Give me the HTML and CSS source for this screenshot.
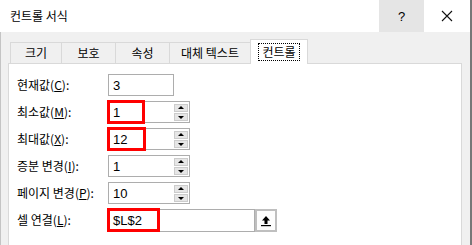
FILE: index.html
```html
<!DOCTYPE html>
<html>
<head>
    <meta charset="UTF-8">
    <title>컨트롤 서식</title>
    <link rel="stylesheet" href="styles.css">
</head>
<body>
<div class="window">
    <div class="titlebar">
        <span class="title">컨트롤 서식</span>
        <div class="caption-btns">
            <span class="cap-btn help">?</span>
            <span class="cap-btn close">
                <svg width="12" height="12" viewBox="0 0 12 12"><path d="M1 1L11 11M11 1L1 11" stroke="#111" stroke-width="1.1" fill="none"/></svg>
            </span>
        </div>
    </div>
    <div class="client">
        <div class="tabs">
            <div class="tab" style="width: 51px">크기</div>
            <div class="tab" style="width: 54px">보호</div>
            <div class="tab" style="width: 54px">속성</div>
            <div class="tab" style="width: 81px">대체 텍스트</div>
            <div class="tab active"><span class="focus">컨트롤</span></div>
        </div>
        <div class="panel">
            <div class="form">
                <label>현재값(<u>C</u>):</label>
                <div class="field">
                    <div class="textbox short"><span>3</span></div>
                </div>

                <label>최소값(<u>M</u>):</label>
                <div class="field">
                    <div class="textbox spin"><span>1</span><div class="spinner"><i class="up"></i><i class="down"></i></div></div>
                    <span class="mark" style="width: 38px"></span>
                </div>

                <label>최대값(<u>X</u>):</label>
                <div class="field">
                    <div class="textbox spin"><span>12</span><div class="spinner"><i class="up"></i><i class="down"></i></div></div>
                    <span class="mark" style="width: 39px"></span>
                </div>

                <label>증분 변경(<u>I</u>):</label>
                <div class="field">
                    <div class="textbox spin"><span>1</span><div class="spinner"><i class="up"></i><i class="down"></i></div></div>
                </div>

                <label>페이지 변경(<u>P</u>):</label>
                <div class="field">
                    <div class="textbox spin"><span>10</span><div class="spinner"><i class="up"></i><i class="down"></i></div></div>
                </div>

                <label>셀 연결(<u>L</u>):</label>
                <div class="field">
                    <div class="refbox">
                        <div class="textbox long"><span>$L$2</span></div>
                        <div class="ref-btn">
                            <svg width="12" height="12" viewBox="0 0 12 12"><path d="M6 1L10 5.5H7.5V9H4.5V5.5H2Z" fill="#000"/><rect x="1" y="10" width="10" height="1.2" fill="#000"/></svg>
                        </div>
                    </div>
                    <span class="mark" style="width: 53px"></span>
                </div>
            </div>
        </div>
    </div>
</div>
</body>
</html>
```

FILE: styles.css
```css
body {
    margin: 0;
    padding: 0;
    font-family: "Noto Sans CJK KR", "Liberation Sans", sans-serif;
    font-size: 12px;
    color: #000;
    background-color: #f0f0f0;
}

.window {
    width: 470px;
    height: 245px;
    border-right: 2px solid #777;
    display: flex;
    flex-direction: column;
    overflow: hidden;
}

.titlebar {
    height: 32px;
    background-color: #fff;
    display: flex;
    align-items: center;
    justify-content: space-between;
    flex-shrink: 0;
}

.title {
    padding-left: 10px;
    line-height: 16px;
}

.caption-btns {
    display: flex;
    height: 100%;
}

.cap-btn {
    width: 45px;
    height: 100%;
    display: flex;
    align-items: center;
    justify-content: center;
}

.help {
    background-color: #e5e5e5;
    font-family: "Liberation Sans", sans-serif;
    font-size: 13px;
}

.close {
    width: 46px;
}

.client {
    flex: 1;
    border-left: 1px solid #c4c4c4;
    padding: 8px 8px 0 7px;
    display: flex;
    flex-direction: column;
}

.tabs {
    display: flex;
    align-items: flex-end;
    padding-left: 2px;
    height: 24px;
    position: relative;
    z-index: 1;
    margin-bottom: -1px;
}

.tab {
    height: 22px;
    box-sizing: border-box;
    border-left: 1px solid #d9d9d9;
    border-top: 1px solid #d9d9d9;
    border-bottom: 1px solid #d9d9d9;
    display: flex;
    align-items: center;
    justify-content: center;
    line-height: 14px;
}

.tab.active {
    width: 58px;
    height: 25px;
    background-color: #fff;
    border: 1px solid #d9d9d9;
    border-bottom: none;
    padding-bottom: 1px;
}

.focus {
    border: 1px dotted #000;
    padding: 1px 3px;
}

.panel {
    flex: 1;
    background-color: #fff;
    border: 1px solid #d9d9d9;
    border-bottom: none;
    padding: 10px 8px 0 8px;
}

.form {
    display: grid;
    grid-template-columns: 91px auto;
    grid-auto-rows: 22px;
    row-gap: 5px;
    align-items: center;
}

.form label {
    line-height: 16px;
    white-space: nowrap;
}

.field {
    position: relative;
    height: 22px;
}

.textbox {
    box-sizing: border-box;
    height: 22px;
    border: 1px solid #adadad;
    background-color: #fff;
    display: flex;
    align-items: center;
    justify-content: space-between;
    padding-left: 4px;
    font-family: "Liberation Sans", sans-serif;
    font-size: 13px;
}

.textbox.short {
    width: 66px;
}

.textbox.spin {
    width: 82px;
    padding-right: 1px;
}

.textbox.long {
    width: 147px;
    height: 23px;
}

.spinner {
    display: flex;
    flex-direction: column;
    gap: 1px;
}

.spinner i {
    width: 14px;
    height: 8px;
    box-sizing: border-box;
    background-color: #e6e6e6;
    border: 1px solid #cccccc;
    position: relative;
}

.spinner i::after {
    content: "";
    position: absolute;
    left: 3px;
    border-left: 3px solid transparent;
    border-right: 3px solid transparent;
}

.spinner i.up::after {
    top: 1px;
    border-bottom: 3px solid #000;
}

.spinner i.down::after {
    top: 2px;
    border-top: 3px solid #000;
}

.refbox {
    display: flex;
}

.ref-btn {
    width: 22px;
    height: 23px;
    box-sizing: border-box;
    border: 2px solid #bfbfbf;
    background-color: #fdfdfd;
    display: flex;
    align-items: center;
    justify-content: center;
}

.mark {
    position: absolute;
    left: -1px;
    top: -1px;
    height: 24px;
    box-sizing: border-box;
    border: 3px solid #ff0000;
}
```
